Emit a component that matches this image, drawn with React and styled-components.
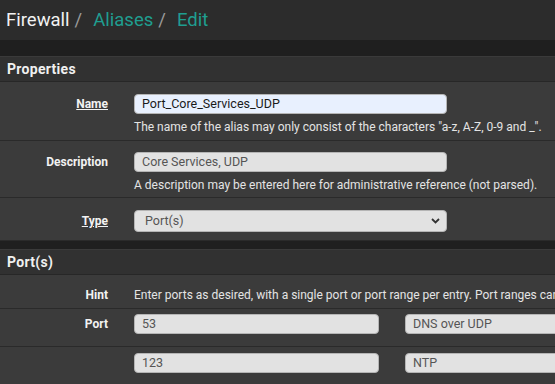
import React from "react";
import styled, { createGlobalStyle } from "styled-components";

const GlobalStyle = createGlobalStyle`
  html, body {
    margin: 0;
    padding: 0;
    background: #1f1f1f;
    font-family: Roboto, "Liberation Sans", sans-serif;
    overflow: hidden;
  }
`;

const Page = styled.div`
  width: 555px;
  height: 384px;
  overflow: hidden;
  background: #1f1f1f;
`;

const Header = styled.div`
  height: 40px;
  background: #2c2c2c;
  display: flex;
  align-items: center;
  padding-left: 6px;
  font-size: 18.5px;
  white-space: nowrap;
`;

const Crumb = styled.span`
  color: ${p => (p.$active ? "#1f9e90" : "#f2f2f2")};
`;

const Sep = styled.span`
  color: #9a9a9a;
  margin: 0 11px 0 5px;
`;

const Panel = styled.section`
  margin-top: ${p => p.$top}px;
  border-top: 1px solid #3a3a3a;
`;

const PanelHeading = styled.h2`
  margin: 0;
  height: 24px;
  line-height: 24px;
  background: #313131;
  color: #f0f0f0;
  font-size: 14px;
  font-weight: 700;
  padding-left: 7px;
  letter-spacing: 0.3px;
  border-bottom: 1px solid #272727;
`;

const Row = styled.div`
  display: grid;
  grid-template-columns: 108px 1fr;
  column-gap: 26px;
  align-items: start;
  background: #3b3b3b;
  border-bottom: 1px solid #2a2a2a;
  padding: ${p => p.$pad || "12px 0 5px"};
`;

const Label = styled.label`
  text-align: right;
  color: #f2f2f2;
  font-size: 12px;
  font-weight: 700;
  line-height: ${p => p.$lh || 20}px;
  text-decoration: ${p => (p.$underline ? "underline" : "none")};
`;

const Field = styled.div`
  display: flex;
  flex-direction: column;
  min-width: 0;
`;

const Input = styled.div`
  box-sizing: border-box;
  width: ${p => p.$w || 313}px;
  height: ${p => p.$h || 20}px;
  flex-shrink: 0;
  background: ${p => (p.$focus ? "#e8f0fe" : "#e2e2e2")};
  border: 1px solid #b5b5b5;
  border-radius: 4px;
  color: ${p => (p.$focus ? "#1a1a1a" : "#555")};
  font-size: 12.5px;
  line-height: 18px;
  padding-left: ${p => p.$pl || 7}px;
  display: flex;
  align-items: center;
  justify-content: space-between;
  padding-right: 6px;
  white-space: nowrap;
  overflow: hidden;
`;

const Help = styled.div`
  color: #e4e4e4;
  font-size: 12px;
  margin-top: 5px;
  line-height: 16px;
  white-space: nowrap;
`;

const HintText = styled.div`
  color: #e4e4e4;
  font-size: 12px;
  line-height: 20px;
  white-space: nowrap;
  overflow: hidden;
`;

const PortLine = styled.div`
  display: flex;
  gap: 26px;
  white-space: nowrap;
`;

const Chevron = () => (
  <svg width="9" height="6" viewBox="0 0 9 6">
    <path d="M1 1l3.5 3.5L8 1" fill="none" stroke="#333" strokeWidth="1.8" />
  </svg>
);

export default function App() {
  return (
    <Page>
      <GlobalStyle />
      <Header>
        <Crumb>Firewall</Crumb>
        <Sep>/</Sep>
        <Crumb $active>Aliases</Crumb>
        <Sep>/</Sep>
        <Crumb $active>Edit</Crumb>
      </Header>

      <Panel $top={16}>
        <PanelHeading>Properties</PanelHeading>
        <Row>
          <Label $underline>Name</Label>
          <Field>
            <Input $focus>Port_Core_Services_UDP</Input>
            <Help>The name of the alias may only consist of the characters "a-z, A-Z, 0-9 and _".</Help>
          </Field>
        </Row>
        <Row $pad="11px 0 4px">
          <Label>Description</Label>
          <Field>
            <Input>Core Services, UDP</Input>
            <Help>A description may be entered here for administrative reference (not parsed).</Help>
          </Field>
        </Row>
        <Row $pad="12px 0 8px">
          <Label $underline $lh={22}>Type</Label>
          <Field>
            <Input $h={22} $pl={10}>
              Port(s)
              <Chevron />
            </Input>
          </Field>
        </Row>
      </Panel>

      <Panel $top={8}>
        <PanelHeading>Port(s)</PanelHeading>
        <Row $pad="10px 0 3px">
          <Label>Hint</Label>
          <HintText>
            Enter ports as desired, with a single port or port range per entry. Port ranges can
          </HintText>
        </Row>
        <Row $pad="5px 0 12px">
          <Label>Port</Label>
          <PortLine>
            <Input $w={245}>53</Input>
            <Input $w={245}>DNS over UDP</Input>
          </PortLine>
        </Row>
        <Row $pad="6px 0 12px">
          <Label />
          <PortLine>
            <Input $w={245}>123</Input>
            <Input $w={245}>NTP</Input>
          </PortLine>
        </Row>
      </Panel>
    </Page>
  );
}
